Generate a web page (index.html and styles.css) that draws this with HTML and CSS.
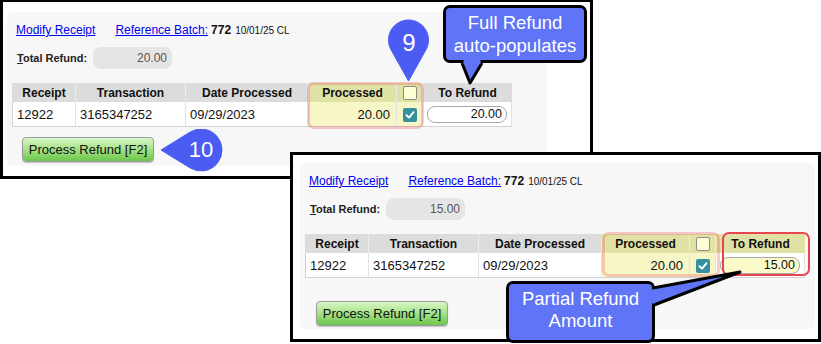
FILE: index.html
```html
<!DOCTYPE html>
<html>
<head>
    <title>Process Refund</title>
    <link rel="stylesheet" href="styles.css">
</head>
<body>
<div class="stage">
    <div class="shot shot-full">
        <div class="screen">
            <div class="links">
                <a href="#">Modify Receipt</a>
                <a href="#" class="batch">Reference Batch:</a>
                <b class="batch-no">772</b>
                <span class="batch-date">10/01/25 CL</span>
            </div>
            <div class="total">
                <label><u>T</u>otal Refund:</label>
                <input class="total-box" type="text" value="20.00" readonly>
            </div>
            <table class="grid">
                <tr>
                    <th class="c-receipt">Receipt</th>
                    <th class="c-trans">Transaction</th>
                    <th class="c-date">Date Processed</th>
                    <th class="c-proc hl">Processed</th>
                    <th class="c-check hl"><span class="box"></span></th>
                    <th class="c-refund">To Refund</th>
                </tr>
                <tr>
                    <td>12922</td>
                    <td>3165347252</td>
                    <td>09/29/2023</td>
                    <td class="num hl">20.00</td>
                    <td class="mid hl"><span class="box checked"><svg viewBox="0 0 14 14" width="14" height="14"><path d="M3.5 7.2 L6 9.6 L10.6 4.2" fill="none" stroke="#fff" stroke-width="2" stroke-linecap="round" stroke-linejoin="round"/></svg></span></td>
                    <td class="mid"><input class="refund-box" type="text" value="20.00" readonly></td>
                </tr>
            </table>
            <button class="process">Process Refund [F2]</button>
            <div class="frame frame-pink"></div>
        </div>
    </div>

    <div class="shot shot-partial">
        <div class="screen">
            <div class="links">
                <a href="#">Modify Receipt</a>
                <a href="#" class="batch">Reference Batch:</a>
                <b class="batch-no">772</b>
                <span class="batch-date">10/01/25 CL</span>
            </div>
            <div class="total">
                <label><u>T</u>otal Refund:</label>
                <input class="total-box" type="text" value="15.00" readonly>
            </div>
            <table class="grid">
                <tr>
                    <th class="c-receipt">Receipt</th>
                    <th class="c-trans">Transaction</th>
                    <th class="c-date">Date Processed</th>
                    <th class="c-proc hl">Processed</th>
                    <th class="c-check hl"><span class="box"></span></th>
                    <th class="c-refund hl">To Refund</th>
                </tr>
                <tr>
                    <td>12922</td>
                    <td>3165347252</td>
                    <td>09/29/2023</td>
                    <td class="num hl">20.00</td>
                    <td class="mid hl"><span class="box checked"><svg viewBox="0 0 14 14" width="14" height="14"><path d="M3.5 7.2 L6 9.6 L10.6 4.2" fill="none" stroke="#fff" stroke-width="2" stroke-linecap="round" stroke-linejoin="round"/></svg></span></td>
                    <td class="mid"><input class="refund-box yellow" type="text" value="15.00" readonly></td>
                </tr>
            </table>
            <button class="process">Process Refund [F2]</button>
            <div class="frame frame-pink"></div>
            <div class="frame frame-red"></div>
        </div>
    </div>

    <!-- step markers -->
    <svg class="pin pin-9" width="41" height="63" viewBox="0 0 41 63">
        <path d="M20.5 62 L3.04 30.76 A20 20 0 1 1 37.96 30.76 Z" fill="#4a5cf2" stroke="#4a5cf2" stroke-width="1" stroke-linejoin="round"/>
    </svg>
    <span class="pin-num num-9">9</span>

    <svg class="pin pin-10" width="63" height="43" viewBox="0 0 63 43">
        <path d="M1 21 L29.97 3.13 A21 21 0 1 1 29.97 38.87 Z" fill="#4a5cf2" stroke="#4a5cf2" stroke-width="1" stroke-linejoin="round"/>
    </svg>
    <span class="pin-num num-10">10</span>

    <!-- callouts -->
    <div class="callout callout-full">Full Refund<br>auto-populates</div>
    <svg class="tail tail-full" width="34" height="30" viewBox="0 0 34 30">
        <path d="M7 6 L15 26 L27 6" fill="#5f74f6" stroke="#000" stroke-width="3" stroke-linejoin="round"/>
        <rect x="8.5" y="1" width="17" height="6" fill="#5f74f6"/>
    </svg>

    <div class="callout callout-partial">Partial Refund<br>Amount</div>
    <svg class="tail tail-partial" width="105" height="45" viewBox="0 0 105 45">
        <path d="M13 23 L100 7 L14 40" fill="#5f74f6" stroke="#000" stroke-width="3" stroke-linejoin="round"/>
        <rect x="8" y="24.5" width="7" height="14" fill="#5f74f6"/>
    </svg>
</div>
</body>
</html>
```

FILE: styles.css
```css
* {
    box-sizing: border-box;
}
body {
    margin: 0;
    background-color: #fff;
    font-family: "Liberation Sans", Arial, sans-serif;
    color: #111;
}
.stage {
    position: relative;
    width: 821px;
    height: 344px;
    overflow: hidden;
}

/* the two screenshots */
.shot {
    position: absolute;
    border: 3px solid #000;
    background-color: #fff;
}
.shot-full {
    left: 0;
    top: -1px;
    width: 593px;
    height: 180px;
    padding: 10px 0 0 4px;
}
.shot-partial {
    left: 290px;
    top: 152px;
    width: 531px;
    height: 190px;
    padding: 8px 0 0 7px;
}
.screen {
    position: relative;
    background-color: #f7f7f7;
    border-radius: 6px;
    padding: 11px 5px 4px;
}
.shot-full .screen {
    width: 540px;
    height: 154px;
}
.shot-partial .screen {
    width: 515px;
    height: 166px;
}

.links {
    display: flex;
    align-items: baseline;
    height: 14px;
    line-height: 14px;
    padding-left: 4px;
    font-size: 12px;
}
.links a {
    color: #0000ee;
    text-decoration: underline;
}
.batch {
    margin-left: 20px;
}
.batch-no {
    margin-left: 3px;
    font-weight: bold;
}
.batch-date {
    margin-left: 4px;
    font-size: 10px;
}

.total {
    display: flex;
    align-items: center;
    height: 22px;
    margin-top: 10px;
    padding-left: 5px;
}
.total label {
    width: 76px;
    font-size: 11px;
    font-weight: bold;
    color: #222;
}
.total-box {
    width: 79px;
    height: 22px;
    border: 0;
    border-radius: 8px;
    background-color: #e5e5e5;
    text-align: right;
    padding: 0 5px;
    font-family: "Liberation Sans", Arial, sans-serif;
    font-size: 12px;
    color: #555;
}

/* receipt table */
.grid {
    margin-top: 14px;
    border-collapse: separate;
    border-spacing: 0;
    table-layout: fixed;
    width: 500px;
}
.grid th {
    height: 19px;
    padding: 0;
    background-color: #dcdcdc;
    border-left: 1px solid #ececec;
    font-size: 12px;
    font-weight: bold;
    color: #111;
    text-align: center;
}
.grid th:first-child {
    border-left-color: #dcdcdc;
}
.grid td {
    height: 25px;
    padding: 0 0 0 4px;
    background-color: #fff;
    border-left: 1px solid #e2e2e2;
    border-bottom: 1px solid #d2d2d2;
    font-size: 13px;
    white-space: nowrap;
}
.grid td:first-child {
    border-left-color: #d2d2d2;
}
.grid td:last-child {
    border-right: 1px solid #e2e2e2;
}
.c-receipt { width: 63px; }
.c-trans { width: 110px; }
.c-date { width: 123px; }
.c-proc { width: 88px; }
.c-check { width: 26px; }
.c-refund { width: 90px; }

.grid th.hl {
    background-color: #e0e1a4;
}
.grid td.hl {
    background-color: #f6f6c6;
}
.grid td.num {
    text-align: right;
    padding: 0 6px 0 0;
}
.grid td.mid {
    text-align: center;
    padding: 0;
}

.box {
    display: inline-block;
    width: 14px;
    height: 14px;
    vertical-align: middle;
    border: 1px solid #8a8a8a;
    border-radius: 2px;
    background-color: #ffffd6;
}
.box.checked {
    border: 0;
    background-color: #33909c;
}
.box svg {
    display: block;
}

.refund-box {
    display: block;
    margin: 0 auto;
    width: 80px;
    height: 17px;
    border: 1px solid #a8a8a8;
    border-radius: 8px;
    background-color: #fff;
    text-align: right;
    padding: 0 4px;
    font-family: "Liberation Sans", Arial, sans-serif;
    font-size: 12.5px;
    color: #111;
}
.refund-box.yellow {
    background-color: #fafacb;
}

.process {
    display: block;
    margin: 10px 0 0 10px;
    width: 132px;
    height: 25px;
    padding: 0;
    border: 1px solid #9a9a9a;
    border-radius: 4px;
    background: linear-gradient(#d8f6c6, #a9e48c 45%, #6cc64c);
    box-shadow: 0 1px 1px rgba(0, 0, 0, 0.2);
    font-family: "Liberation Sans", Arial, sans-serif;
    font-size: 13px;
    color: #111;
}
.shot-partial .process {
    margin-top: 23px;
    margin-left: 11px;
}

/* highlight frames drawn over the table */
.frame {
    position: absolute;
    top: 70px;
    border-radius: 7px;
}
.frame-pink {
    left: 300px;
    width: 117px;
    height: 47px;
    border: 3px solid rgba(236, 100, 100, 0.33);
}
.shot-partial .frame-pink {
    left: 302px;
    top: 69px;
    width: 118px;
    height: 45px;
}
.frame-red {
    left: 422px;
    top: 69px;
    width: 88px;
    height: 44px;
    border: 2px solid #e8454e;
}

/* step markers */
.pin {
    position: absolute;
}
.pin-9 {
    left: 388px;
    top: 19px;
}
.pin-10 {
    left: 160px;
    top: 129px;
}
.pin-num {
    position: absolute;
    color: #fff;
    line-height: 1;
    transform: translate(-50%, -50%);
}
.num-9 {
    left: 409px;
    top: 43px;
    font-size: 24px;
}
.num-10 {
    left: 201px;
    top: 150px;
    font-size: 22px;
}

/* callout boxes */
.callout {
    position: absolute;
    display: flex;
    align-items: center;
    justify-content: center;
    text-align: center;
    border: 3px solid #000;
    border-radius: 7px;
    background-color: #5f74f6;
    color: #fff;
    font-size: 18.5px;
}
.callout-full {
    left: 443px;
    top: 5px;
    width: 144px;
    height: 58px;
    line-height: 23px;
}
.callout-partial {
    left: 506px;
    top: 281px;
    width: 149px;
    height: 62px;
    line-height: 22px;
    padding-bottom: 4px;
}
.tail {
    position: absolute;
}
.tail-full {
    left: 455px;
    top: 57px;
}
.tail-partial {
    left: 640px;
    top: 265px;
}
```
